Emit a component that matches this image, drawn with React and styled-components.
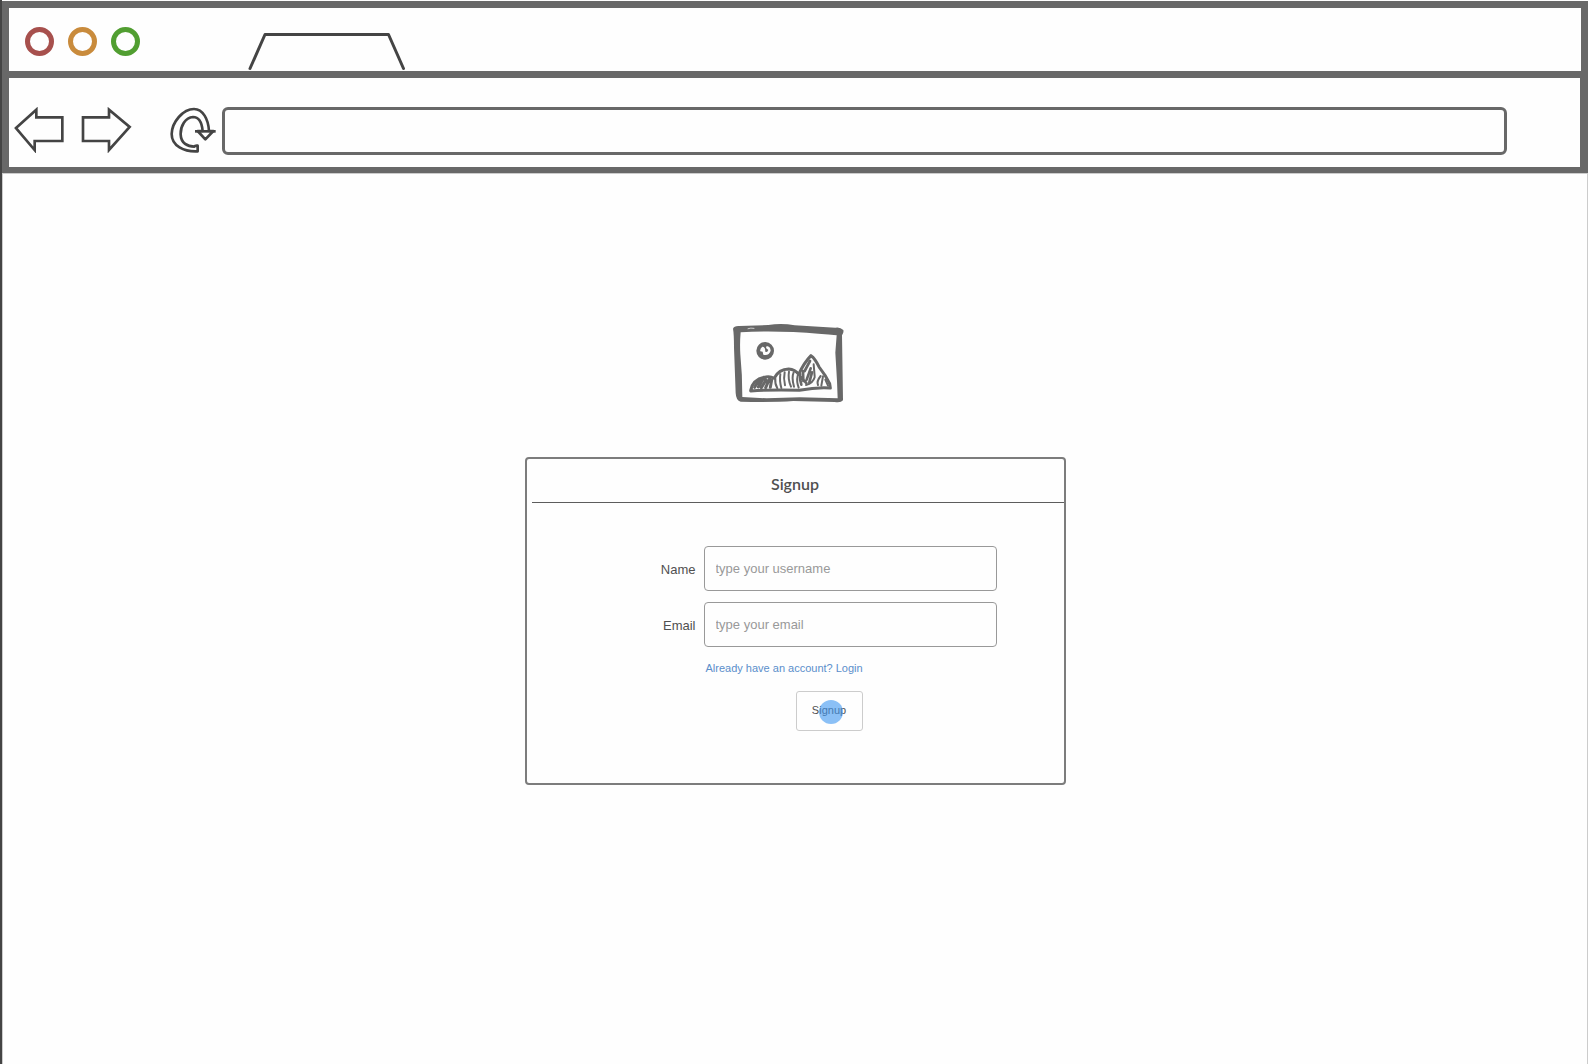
import React from 'react';
import styled, { createGlobalStyle } from 'styled-components';

const frame = '#686868';
const ink = '#444444';
const text = '#505050';
const hairline = '#cccccc';

const GlobalStyle = createGlobalStyle`
  *, *::before, *::after { box-sizing: border-box; }
  body {
    margin: 0;
    background: #fefefe;
    color: ${text};
    font-family: "Liberation Sans", Arial, sans-serif;
    font-size: 13px;
  }
`;

const Window = styled.div`
  display: flex;
  flex-direction: column;
  min-height: 100vh;
  padding-top: 1px;
  border-left: 2px solid ${ink};
`;

const Chrome = styled.header`
  border: 7px solid ${frame};
  border-bottom-width: 6px;
`;

const TitleBar = styled.div`
  display: flex;
  align-items: flex-end;
  height: 63px;
  padding-left: 16px;
`;

const Lights = styled.div`
  display: flex;
  gap: 14px;
  align-self: center;
  padding-top: 3px;
`;

const Light = styled.button`
  width: 29px;
  height: 29px;
  padding: 0;
  border: 5px solid ${(p) => p.$color};
  border-radius: 50%;
  background: transparent;
`;

const TabShape = styled.svg`
  display: block;
  margin-left: 106px;
  fill: none;
  stroke: ${ink};
  stroke-width: 3;
  stroke-linecap: round;
  stroke-linejoin: round;
`;

const NavBar = styled.nav`
  display: flex;
  align-items: center;
  height: 96px;
  padding: 0 73px 0 5px;
  border-top: 7px solid ${frame};
  border-right: 1px solid ${frame};
`;

const NavButton = styled.button`
  display: block;
  padding: 0;
  margin-right: ${(p) => p.$after}px;
  border: 0;
  background: none;

  svg {
    display: block;
    fill: none;
    stroke: ${ink};
    stroke-width: 8;
  }
`;

const Address = styled.input`
  flex: 1;
  min-width: 0;
  height: 48px;
  margin-top: 16px;
  margin-bottom: 0;
  padding: 0 12px;
  border: 3px solid ${frame};
  border-radius: 6px;
  background: transparent;
  font: inherit;
`;

const NavItems = styled.div`
  display: flex;
  align-items: center;
  padding-top: 14px;
`;

const Page = styled.main`
  display: flex;
  flex: 1;
  flex-direction: column;
  align-items: center;
  gap: 54px;
  padding: 149px 16px 32px;
  border: 1px solid ${hairline};
  border-bottom: 0;
`;

const Picture = styled.svg`
  display: block;
  margin-right: 13px;
  fill: none;
  stroke: ${frame};
  stroke-linecap: round;
  stroke-linejoin: round;
`;

const Card = styled.section`
  width: 541px;
  max-width: 100%;
  border: 2px solid #7c7c7c;
  border-radius: 4px;
`;

const Title = styled.h1`
  margin: 0 0 0 5px;
  padding: 14px 5px 7px 0;
  border-bottom: 1px solid #5c5c5c;
  font-family: Lato, "Liberation Sans", sans-serif;
  font-size: 16px;
  font-weight: 600;
  line-height: 22px;
  text-align: center;
`;

const Form = styled.form`
  display: grid;
  grid-template-columns: 1fr 293px;
  column-gap: 8px;
  row-gap: 11px;
  align-items: center;
  padding: 43px 67px 52px 0;
`;

const Label = styled.label`
  padding-top: 2px;
  text-align: right;
`;

const Field = styled.input`
  width: 100%;
  height: 45px;
  padding: 0 11px;
  border: 1px solid #999999;
  border-radius: 4px;
  background: transparent;
  color: ${text};
  font: inherit;

  &::placeholder {
    color: #999999;
    opacity: 1;
  }
`;

const Actions = styled.div`
  grid-column: 2;
  display: flex;
  flex-direction: column;
  align-items: flex-start;
  gap: 15px;
  padding: 3px 0 0 2px;
`;

const LoginLink = styled.a`
  color: #5b8ecb;
  font-size: 11px;
  line-height: 15px;
  text-decoration: none;
`;

const Submit = styled.button`
  position: relative;
  width: 67px;
  height: 40px;
  margin-left: 90px;
  padding: 0 0 2px;
  border: 1px solid ${hairline};
  border-radius: 3px;
  background: transparent;
  color: ${text};
  font: inherit;
  font-size: 11px;
`;

const TouchPoint = styled.span`
  position: absolute;
  top: 8px;
  left: 22px;
  width: 24px;
  height: 24px;
  border-radius: 50%;
  background: rgba(62, 150, 240, 0.6);
`;

const lights = [
  { label: 'Close', color: '#a7504d' },
  { label: 'Minimize', color: '#c98b3c' },
  { label: 'Maximize', color: '#519e31' },
];

const fields = [
  { id: 'name', label: 'Name', type: 'text', placeholder: 'type your username' },
  { id: 'email', label: 'Email', type: 'email', placeholder: 'type your email' },
];

function BrowserChrome() {
  return (
    <Chrome>
      <TitleBar>
        <Lights>
          {lights.map((l) => (
            <Light key={l.label} type="button" aria-label={l.label} $color={l.color} />
          ))}
        </Lights>
        <TabShape width="162" height="40" viewBox="0 0 162 40" aria-hidden="true">
          <path d="M4 37.5 19 3.5H142.500l15 34" />
        </TabShape>
      </TitleBar>
      <NavBar>
        <NavItems>
          <NavButton type="button" aria-label="Back" $after={16}>
            <svg width="51" height="46" viewBox="42 321 153 138">
              <path d="M48 384 109 329V352H187V423H104V450Z" />
            </svg>
          </NavButton>
          <NavButton type="button" aria-label="Forward" $after={37}>
            <svg width="51" height="46" viewBox="243 321 153 138">
              <path d="M249 352H327V329L389 381 327 450V423H249Z" />
            </svg>
          </NavButton>
          <NavButton type="button" aria-label="Reload" $after={5}>
            <svg width="48" height="46" viewBox="510 321 144 138">
              <path
                strokeLinejoin="round"
                d="M596 437V454C555 456 518 438 518 402C519 366 552 327 585 327C612 327 628 358 630 393H643L619 418 596 393H611C609 371 601 351 582 351C559 352 544 378 545 404C546 430 566 440 586 440Q588 436 596 437Z"
              />
              <path d="M588 394H650" />
            </svg>
          </NavButton>
        </NavItems>
        <Address type="text" aria-label="Address" />
      </NavBar>
    </Chrome>
  );
}

function PictureIcon() {
  return (
    <Picture width="112" height="80" viewBox="39 36 336 240" role="img" aria-label="Logo">
      <path
        fill={frame}
        stroke="none"
        fillRule="evenodd"
        d="M39 53Q42 44 58 45L145 42Q185 36 224 43L346 50Q360 47 370 57Q372 65 366 73L369 268Q363 276 344 273L220 270Q165 274 62 272Q48 269 47 246L42 110Q42 69 39 53ZM62 64Q59 95 61 130Q67 190 67 258L140 262L240 259L353 262L351 210L346 125L350 73Q305 68 220 63Q130 59 62 64Z"
      />
      <path stroke="#fefefe" strokeWidth="2" d="M84 53Q92 50 102 52" />
      <path
        fill={frame}
        stroke="none"
        fillRule="evenodd"
        d="M136 93A26 26 0 1 1 135 146A26 26 0 1 1 136 93ZM127 107Q119 113 121 121L128 122 130 131Q147 135 152 119Q151 106 140 105L138 111 145 117Q142 126 136 122L135 113Q132 106 127 107Z"
      />
      <path strokeWidth="9" d="M92 238Q99 204 137 198Q151 195 162 202Q177 174 206 174Q225 175 236 190Q253 154 273 134Q285 142 298 169Q318 194 329 218L331 231Q290 228 238 238Q165 235 92 240Z" />
      <path strokeWidth="9" d="M104 229Q112 207 136 204M115 228 125 211M124 230 138 207M137 230 149 203M151 229 155 207" />
      <path strokeWidth="6" d="M166 202Q164 218 172 232M181 190Q178 208 184 231M194 184Q190 202 195 223M207 182Q203 205 213 227M221 184Q214 199 222 227M233 194Q229 211 236 230" />
      <path strokeWidth="8" d="M240 188Q239 207 244 221M249 180 250 210M270 150 254 180M272 172 260 206M276 184 268 214M242 198 259 216" />
      <path strokeWidth="6" d="M281 160 284 196M302 195Q289 211 294 222M309 196 304 224M316 206 324 224M258 222Q279 217 284 199" />
    </Picture>
  );
}

export default function App() {
  return (
    <>
      <GlobalStyle />
      <Window>
        <BrowserChrome />
        <Page>
          <PictureIcon />
          <Card>
            <Title>Signup</Title>
            <Form onSubmit={(e) => e.preventDefault()}>
              {fields.map((f) => (
                <React.Fragment key={f.id}>
                  <Label htmlFor={f.id}>{f.label}</Label>
                  <Field id={f.id} type={f.type} placeholder={f.placeholder} />
                </React.Fragment>
              ))}
              <Actions>
                <LoginLink href="#login">Already have an account? Login</LoginLink>
                <Submit type="submit">
                  Signup
                  <TouchPoint />
                </Submit>
              </Actions>
            </Form>
          </Card>
        </Page>
      </Window>
    </>
  );
}
